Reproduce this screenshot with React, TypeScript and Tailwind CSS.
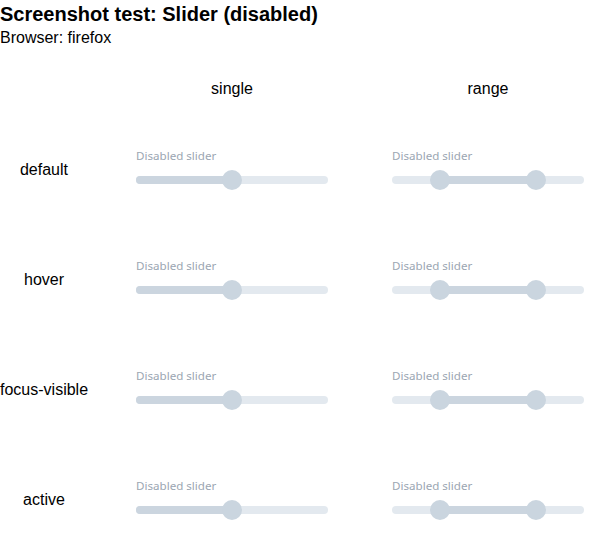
import React from "react";

function Thumb({ left }: { left: number }) {
  return (
    <div
      className="absolute top-1/2 w-5 h-5 -ml-[10px] -mt-[10px] rounded-full bg-[#cad5df]"
      style={{ left: `${left}%` }}
    />
  );
}

function Slider({ range }: { range: boolean }) {
  const from = range ? 25 : 0;
  const to = range ? 75 : 50;
  return (
    <div className="w-[192px] flex flex-col">
      <div className="text-[11.6px] leading-[16px] text-[#9ba6b2] font-['Noto_Sans',sans-serif] whitespace-nowrap">Disabled slider</div>
      <div className="relative h-5 mt-[6px]">
        <div className="absolute left-0 right-0 top-[6px] h-2 rounded-full bg-[#e3e9ef]" />
        <div
          className="absolute top-[6px] h-2 rounded-full bg-[#cbd5df]"
          style={{ left: `${from}%`, width: `${to - from}%` }}
        />
        {range && <Thumb left={from} />}
        <Thumb left={to} />
      </div>
    </div>
  );
}

const rows = ["default", "hover", "focus-visible", "active"];

export default function App() {
  return (
    <div className="w-[601px] h-[538px] bg-white text-black font-['Liberation_Sans',Arial,sans-serif]">
      <div className="text-[20px] leading-[29px] font-bold">Screenshot test: Slider (disabled)</div>
      <div className="text-[16px] leading-[18px]">Browser: firefox</div>
      <div className="flex h-[68px] pt-[33px] text-[16px] leading-[18px]">
        <div className="w-[88px]" />
        <div className="w-[288px] text-center">single</div>
        <div className="w-[224px] text-center">range</div>
      </div>
      {rows.map((r) => (
        <div key={r} className="flex h-[110px] items-start">
          <div className="w-[88px] self-center text-center text-[16px] leading-[18px] whitespace-nowrap">{r}</div>
          <div className="w-[288px] pt-[33px] flex justify-center">
            <Slider range={false} />
          </div>
          <div className="w-[224px] pt-[33px] flex justify-center">
            <Slider range={true} />
          </div>
        </div>
      ))}
    </div>
  );
}
